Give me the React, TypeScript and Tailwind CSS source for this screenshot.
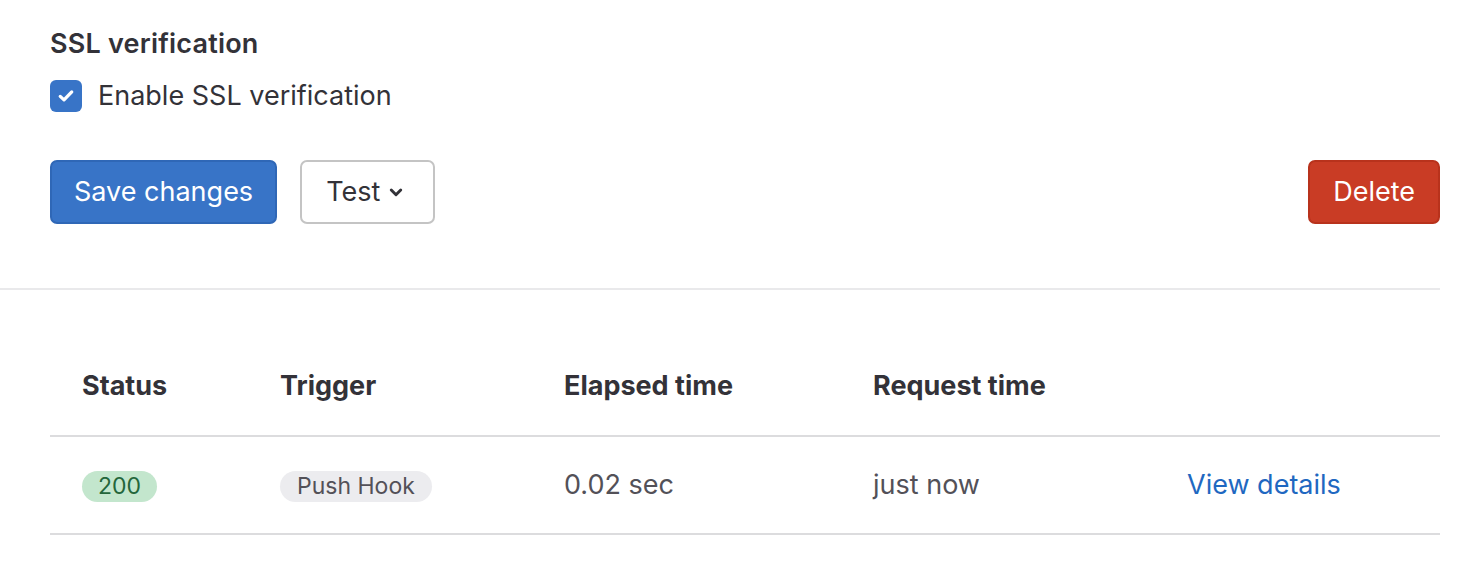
import React from "react";

const rows = [
  { status: "200", trigger: "Push Hook", elapsed: "0.02 sec", requested: "just now" },
];

export default function App() {
  return (
    <div className="w-[1458px] h-[562px] bg-white font-['Inter',sans-serif] text-[#333238] overflow-hidden">
      <div className="pl-[50px] pr-[18px] pt-[26px]">
        <h2 className="text-[27px] leading-[36px] font-semibold tracking-[0.2px]">SSL verification</h2>
        <label className="mt-[17px] flex items-center gap-4">
          <span className="w-8 h-8 rounded-[6px] bg-[#3874c7] flex items-center justify-center">
            <svg width="20" height="20" viewBox="0 0 16 16" fill="none">
              <path d="M3.4 8.3l3 2.8 6.2-6.4" stroke="white" strokeWidth="2.6" strokeLinecap="round" strokeLinejoin="round" />
            </svg>
          </span>
          <span className="text-[27px] leading-[34px]">Enable SSL verification</span>
        </label>

        <div className="mt-[47px] flex items-center">
          <button className="h-16 px-[22px] rounded-[7px] bg-[#3874c7] border-2 border-[#2f67b6] text-white text-[27px]">
            Save changes
          </button>
          <button className="ml-[23px] h-16 pl-6 pr-[28px] rounded-[7px] bg-white border-2 border-[#c4c4c4] text-[27px] flex items-center gap-[7px]">
            Test
            <svg width="18" height="18" viewBox="0 0 16 16" fill="none">
              <path d="M3.8 6.2l4.2 4.2 4.2-4.2" stroke="#333238" strokeWidth="2.6" strokeLinecap="round" strokeLinejoin="round" />
            </svg>
          </button>
          <button className="ml-auto h-16 px-[23px] rounded-[7px] bg-[#c93c25] border-2 border-[#b8321c] text-white text-[27px]">
            Delete
          </button>
        </div>
      </div>

      <div className="mt-[64px] w-[1440px] h-[2px] bg-[#e9e9eb]" />

      <div className="pl-[50px] pr-[18px] pt-[48px]">
        <table className="w-full table-fixed border-collapse text-left">
          <colgroup>
            <col className="w-[198px]" />
            <col className="w-[284px]" />
            <col className="w-[309px]" />
            <col className="w-[314px]" />
            <col />
          </colgroup>
          <thead>
            <tr className="border-b-2 border-[#dcdcde]">
              <th className="pl-8 h-[98px] text-[27px] font-bold">Status</th>
              <th className="pl-8 text-[27px] font-bold">Trigger</th>
              <th className="pl-8 text-[27px] font-bold">Elapsed time</th>
              <th className="pl-8 text-[27px] font-bold">Request time</th>
              <th />
            </tr>
          </thead>
          <tbody>
            {rows.map((r, i) => (
              <tr key={i} className="border-b-2 border-[#dcdcde] text-[27px] text-[#535158]">
                <td className="pl-8 h-[98px]">
                  <span className="inline-flex items-center h-[31px] px-[16px] rounded-full bg-[#c3e6cd] text-[#24663b] text-[23px]">
                    {r.status}
                  </span>
                </td>
                <td className="pl-8">
                  <span className="inline-flex items-center h-[31px] px-[17px] rounded-full bg-[#ececef] text-[#535158] text-[23px]">
                    {r.trigger}
                  </span>
                </td>
                <td className="pl-8">{r.elapsed}</td>
                <td className="pl-8">{r.requested}</td>
                <td className="pl-8">
                  <a className="text-[#1f68c1]" href="#">View details</a>
                </td>
              </tr>
            ))}
          </tbody>
        </table>
      </div>
    </div>
  );
}
